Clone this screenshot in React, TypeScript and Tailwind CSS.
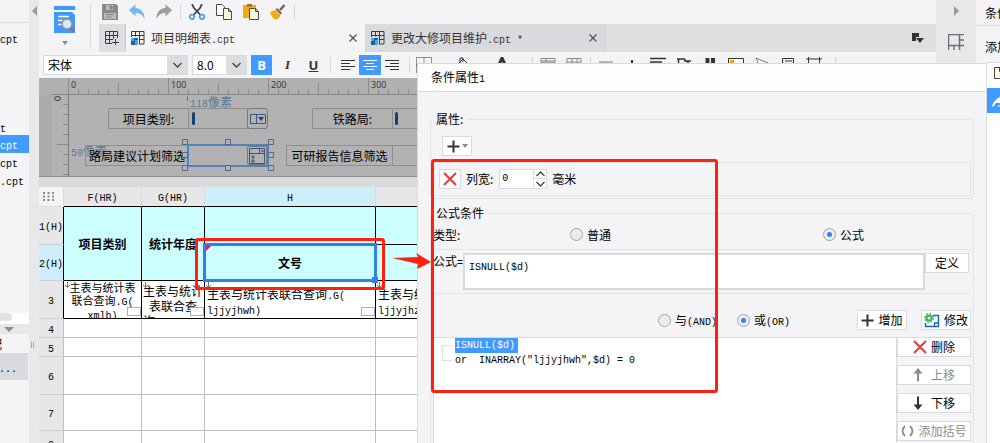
import React from "react";
import clsx from "clsx";

const ruler = Array.from({ length: 88 }, (_, i) => i * 10);
const vRuler = [9, 19, 29, 39, 49, 59, 69, 79];

// Latin characters are half as wide as the Chinese ones
const Mixed = ({ text }: { text: string }) => (
  <span>
    {text.split(/([\x20-\x7e]+)/).map((part, index) =>
      /^[\x20-\x7e]+$/.test(part) ? (
        <span
          key={index}
          className="font-['Liberation_Mono',monospace] text-[10px] leading-none whitespace-pre"
        >
          {part}
        </span>
      ) : (
        part
      )
    )}
  </span>
);

const Divider = () => <div className="h-4 w-px shrink-0 bg-[#d6d7da]" />;

const SaveIcon = () => (
  <svg viewBox="0 0 16 16" width={16} height={16}>
    <path d="M0 0h14l2 2v14H0z" fill="#8a8a8c" />
    <path d="M4 1h7v5H4zM2 9h12v6H2z" fill="#b9b9bb" />
    <path d="M8 2h2v3H8zM4 10.500h8M4 13h6" stroke="#8a8a8c" fill="#8a8a8c" />
  </svg>
);

const ArrowIcon = ({ flip }: { flip?: boolean }) => (
  <svg
    viewBox="0 0 16 16"
    width={16}
    height={16}
    className={clsx(flip && "-scale-x-100")}
  >
    <path
      d="M0 6L6.500 .5V4C12 4 15.500 8 15.500 15C13.500 11 11 9 6.500 9v3.500z"
      fill={flip ? "#9c9c9e" : "#7db4f2"}
    />
  </svg>
);

const ScissorsIcon = () => (
  <svg viewBox="0 0 16 16" width={16} height={16} fill="none">
    <path d="M3 0l2 4 6.500 7M13 0l-2 4-6.500 7" stroke="#3c3c3e" strokeWidth={1.700} />
    <circle cx={3} cy={12.800} r={2.300} stroke="#4096f7" strokeWidth={1.600} />
    <circle cx={13} cy={12.800} r={2.300} stroke="#4096f7" strokeWidth={1.600} />
  </svg>
);

const CopyIcon = () => (
  <svg viewBox="0 0 16 16" width={16} height={16} stroke="#4a4a4a">
    <path d="M.5 .5h5.500l2.500 2.500v8.500h-8z" fill="#fff" />
    <path d="M7.500 4.500h5l3 3v8h-8z" fill="#fff6e0" />
    <path d="M12.500 4.500v3h3" fill="none" />
  </svg>
);

const PasteIcon = () => (
  <svg viewBox="0 0 16 16" width={16} height={16}>
    <path d="M0 1h13v13H0z" fill="#f4ab13" />
    <path d="M4 0h5v2.500H4z" fill="#b06a16" />
    <path d="M6.500 4.500h6l3 3v8h-9z" fill="#fff6e0" stroke="#4a4a4a" />
    <path d="M12.500 4.500v3h3" fill="none" stroke="#4a4a4a" />
  </svg>
);

const BrushIcon = () => (
  <svg viewBox="0 0 16 16" width={16} height={16}>
    <path d="M14.500 1L10 6" stroke="#6b6461" strokeWidth={2.600} />
    <path d="M7 4l5 5-1.500 1.500-5-5z" fill="#6b6461" />
    <path d="M5 6l5.500 5c-1 3-3 4.500-5.500 4.500C2.500 14 1 11.500 0 8z" fill="#f4ab13" />
  </svg>
);

const TemplateIcon = () => (
  <svg viewBox="0 0 22 30" width={22} height={30}>
    <path d="M0 1h21v4H0zM0 7h18l3 3v18H0z" fill="#3f98fb" />
    <path d="M4 11.500h11M4 15.500h5M4 19.500h5" stroke="#fff" strokeWidth={1.400} />
    <circle cx={13} cy={19} r={5} fill="#dbe7f3" stroke="#8e9399" strokeWidth={1.400} />
    <path d="M17 23l3.500 3.500" stroke="#8a6f62" strokeWidth={2} />
  </svg>
);

const SheetIcon = () => (
  <svg viewBox="0 0 14 14" width={14} height={14} fill="none" className="shrink-0">
    <path d="M.5 6V.5h12.500v12.500H8M.5 4.500H13M8 8.500h5M4.500 .5v5M8.500 .5V13" stroke="#3c3c3e" />
    <path d="M0 7h7v3l-3 4H0z" fill="#1d5fa8" />
    <path d="M0 7h3v3H0zM4 9h3v5H4z" fill="#35b2ec" />
  </svg>
);

const AddSheetIcon = () => (
  <svg viewBox="0 0 14 14" width={14} height={14} fill="none" stroke="#3c3c3e">
    <path d="M7 12.500H.5V.5h12V7M.5 4.500h12M.5 8.500H8M4.500 .5v12M8.500 .5V8M10.500 8v6M7 11.500h7" />
  </svg>
);

const Chevron = ({ up }: { up?: boolean }) => (
  <svg viewBox="0 0 9 6" width={9} height={6} fill="none">
    <path d={up ? "M.5 5l4-4 4 4" : "M.5 1l4 4 4-4"} stroke="#444" strokeWidth={1.300} />
  </svg>
);

const Caret = () => (
  <svg viewBox="0 0 6 4" width={6} height={4}>
    <path d="M0 0h6L3 4z" fill="#8c8c8e" />
  </svg>
);

const CrossIcon = () => (
  <svg viewBox="0 0 14 14" width={14} height={14} className="shrink-0">
    <path d="M1 1l12 12M13 1L1 13" stroke="#e5413b" strokeWidth={2.200} />
  </svg>
);

const PlusIcon = () => (
  <svg viewBox="0 0 13 13" width={13} height={13} className="shrink-0">
    <path d="M6.500 .5v12M.5 6.500h12" stroke="#333" strokeWidth={2} />
  </svg>
);

const GearIcon = () => (
  <svg viewBox="0 0 16 15" width={16} height={15} className="shrink-0" fill="none">
    <path d="M9 2.500h5.500v11h-13V10M10.500 13.500v-3.500h4" stroke="#1565b0" strokeWidth={1.400} />
    <circle cx={5} cy={5} r={2.500} stroke="#35b558" strokeWidth={2} />
    <circle cx={5} cy={5} r={4.200} stroke="#35b558" strokeWidth={1.600} strokeDasharray="1.650" />
  </svg>
);

const MoveIcon = ({ down }: { down?: boolean }) => (
  <svg
    viewBox="0 0 10 14"
    width={10}
    height={14}
    className={clsx("shrink-0", down && "rotate-180")}
  >
    <path d="M5 0l4.500 5.500h-9z" fill={down ? "#333" : "#8a8a8a"} />
    <path d="M5 3v10.500" stroke={down ? "#333" : "#8a8a8a"} strokeWidth={2} />
  </svg>
);

const ParenIcon = () => (
  <svg viewBox="0 0 13 12" width={13} height={12} className="shrink-0" fill="none">
    <path d="M4 1Q-1 6 4 11M9 1Q14 6 9 11" stroke="#8a8a8a" strokeWidth={1.800} />
  </svg>
);

const AlignIcon = ({ d, light }: { d: string; light?: boolean }) => (
  <svg viewBox="0 0 14 12" width={14} height={12}>
    <path d={d} stroke={light ? "#fff" : "#333"} strokeWidth={1} />
  </svg>
);

const Field = ({ children, size, label }: any) => (
  <div className={clsx("flex h-5 border border-[#d9dadd] bg-white", size)}>
    <select
      aria-label={label}
      className="min-w-0 flex-1 appearance-none bg-white pl-1 text-[12px] leading-4 text-black"
    >
      {children}
    </select>
    <div className="flex w-5 shrink-0 items-center justify-center bg-[#dcdde0]">
      <Chevron />
    </div>
  </div>
);

const Tab = ({ name, active }: { name: string; active?: boolean }) => (
  <div
    className={clsx(
      "flex h-full w-60 items-center border-r border-[#d6d7da] pr-[6px] pl-[5px] text-[#333]",
      active ? "bg-[#f4f4f7]" : "bg-[#d9dadd]"
    )}
  >
    <SheetIcon />
    <span className="ml-[6px] flex-1">
      <Mixed text={name} />
    </span>
    <button aria-label="关闭" className="p-[2px]">
      <svg viewBox="0 0 8 8" width={8} height={8}>
        <path d="M.5 .5l7 7M7.500 .5l-7 7" stroke="#555" strokeWidth={1.300} />
      </svg>
    </button>
  </div>
);

const FormatIcon = ({ children, width }: any) => (
  <button className={clsx("flex h-5 shrink-0 items-center justify-center", width)}>
    <svg viewBox="0 0 16 16" width={16} height={16} fill="none" stroke="#333">
      {children}
    </svg>
  </button>
);

const Header = () => (
  <div className="shrink-0">
    <div className="flex">
      <div className="flex w-[60px] shrink-0 justify-between pr-2 pl-[15px]">
        <div className="flex flex-col items-center pt-[5px]">
          <TemplateIcon />
          <div className="mt-[6px]">
            <Caret />
          </div>
        </div>
        <div className="mt-[5px] h-[42px] w-px bg-[#d6d7da]" />
      </div>
      <div className="min-w-0 flex-1">
        <div className="flex h-6 items-center pl-[3px]">
          <div className="flex gap-[11px]">
            <SaveIcon />
            <ArrowIcon />
            <ArrowIcon flip />
          </div>
          <div className="mx-2">
            <Divider />
          </div>
          <div className="flex gap-[11px]">
            <ScissorsIcon />
            <CopyIcon />
            <PasteIcon />
            <BrushIcon />
          </div>
          <div className="mx-2">
            <Divider />
          </div>
        </div>
        <div className="flex h-7 items-center bg-[#dfdfe1]">
          <button
            aria-label="新建"
            className="flex h-full w-[27px] items-center justify-center border-r border-[#c8c9cc] bg-[#dcdde0]"
          >
            <AddSheetIcon />
          </button>
          <Tab name="项目明细表.cpt" active />
          <Tab name="更改大修项目维护.cpt *" />
          <svg viewBox="0 0 12 10" width={12} height={10} className="mr-3 ml-auto">
            <path d="M0 0h7v4H4v4H0zM4 5h8L8 10z" fill="#333" />
          </svg>
        </div>
      </div>
    </div>
    <div className="flex h-[26px] items-center overflow-hidden pl-1">
      <Field size="w-[145px]" label="字体">
        <option>宋体</option>
      </Field>
      <div className="w-1" />
      <Field size="w-[55px]" label="字号">
        <option>8.0</option>
      </Field>
      <div className="ml-1 flex gap-[5px] font-['Open_Sans',sans-serif] text-[13px] font-bold">
        <button className="h-5 w-[21px] bg-[#409aff] leading-5 text-white">B</button>
        <button className="h-5 w-[21px] font-['Liberation_Serif',serif] leading-5 text-[#333] italic">
          I
        </button>
        <button className="h-5 w-[21px] leading-5 text-[#333] underline">U</button>
      </div>
      <div className="mr-[6px] ml-[6px]">
        <Divider />
      </div>
      <div className="flex">
        <button className="flex h-5 w-[22px] items-center justify-center">
          <AlignIcon d="M0 1.500h14M0 4.500h9M0 7.500h14M0 10.500h9" />
        </button>
        <button className="flex h-5 w-[22px] items-center justify-center bg-[#409aff]">
          <AlignIcon d="M0 1.500h14M3 4.500h8M0 7.500h14M3 10.500h8" light />
        </button>
        <button className="flex h-5 w-[22px] items-center justify-center">
          <AlignIcon d="M0 1.500h14M5 4.500h9M0 7.500h14M5 10.500h9" />
        </button>
      </div>
      <div className="ml-[6px]">
        <Divider />
      </div>
      <div className="flex">
        <FormatIcon width="w-7">
          <path d="M.5 .5h15v15H.5zM8 .5v15M.5 8h15" strokeDasharray="1" />
        </FormatIcon>
        <FormatIcon width="w-[48px]">
          <path d="M3 8l6-6 6 6-6 6zM6 6V1h3v4" />
        </FormatIcon>
        <FormatIcon width="w-8">
          <path d="M3 12L8 1l5 11M5 8h6" strokeWidth={3} />
        </FormatIcon>
      </div>
      <div className="mr-[2px] ml-[14px]">
        <Divider />
      </div>
      <div className="flex">
        <FormatIcon width="w-[26px]">
          <path d="M1 1.500h14v12H1zM1 4h14M6 1v3" stroke="#888" />
          <path d="M1 4h14v4H1z" fill="#aaa" stroke="none" />
        </FormatIcon>
        <FormatIcon width="w-[26px]">
          <path d="M1 1.500h14v12H1zM1 5h14M6 1v12M11 1v12" stroke="#888" />
        </FormatIcon>
      </div>
      <div className="mr-[2px] ml-[3px]">
        <Divider />
      </div>
      <div className="flex">
        <FormatIcon width="w-[26px]">
          <path d="M1 5h14M1 10h14" stroke="#777" />
        </FormatIcon>
        <FormatIcon width="w-[26px]">
          <path d="M8 3v10" strokeWidth={2} />
        </FormatIcon>
        <FormatIcon width="w-[26px]">
          <path d="M0 1.500h16M0 5h12M0 9h16" strokeWidth={1.500} />
        </FormatIcon>
        <FormatIcon width="w-[26px]">
          <path d="M1 2h8M2.500 2v11M9 2v3M9 4h6M12 4v8" strokeWidth={1.500} />
        </FormatIcon>
        <FormatIcon width="w-[26px]">
          <path d="M5.500 1v12M11 1v12" strokeWidth={4} />
        </FormatIcon>
        <FormatIcon width="w-[26px]">
          <path d="M.5 1.500h15v12H.5z" fill="#fff" />
          <path d="M2 3h4v4H2z" fill="#f4ab13" stroke="none" />
        </FormatIcon>
        <FormatIcon width="w-[26px]">
          <path d="M2 1l12 5-5 2-2 5z" stroke="#777" />
        </FormatIcon>
        <FormatIcon width="w-[26px]">
          <path d="M2.500 1.500h11v12h-11zM5 4h7M5 6.500h7" />
        </FormatIcon>
        <FormatIcon width="w-[26px]">
          <path d="M0 2h16M2.500 0v14M13.500 0v14" />
        </FormatIcon>
      </div>
      <div className="ml-2">
        <Divider />
      </div>
    </div>
  </div>
);

const handles = [
  "left-[113px] top-[44px]",
  "left-[156px] top-[44px]",
  "left-[199px] top-[44px]",
  "left-[113px] top-[57px]",
  "left-[199px] top-[57px]",
  "left-[113px] top-[70px]",
  "left-[156px] top-[70px]",
  "left-[199px] top-[70px]",
];

const widget = "absolute h-[21px] border border-[#8f8f8f] text-center leading-[19px]";

// Parameter pane: rulers and the free canvas with the query widgets
const ParamPane = () => (
  <div className="shrink-0 overflow-hidden border-b border-[#929292] bg-[#b2b2b2] text-black">
    <svg width="100%" height={17} className="block bg-[#b0b0b0]">
      <g stroke="#8c8c8c">
        {ruler.map((x) => (
          <line
            key={x}
            x1={x + 29.500}
            x2={x + 29.500}
            y1={x % 100 === 0 ? 0 : x % 50 === 0 ? 5 : 11}
            y2={16}
          />
        ))}
        <line x1={13} x2="100%" y1={16.500} y2={16.500} stroke="#888" />
      </g>
      {ruler
        .filter((x) => x % 100 === 0)
        .map((x) => (
          <text
            key={x}
            x={x + 32}
            y={10}
            fill="#333"
            className="font-['Open_Sans',sans-serif] text-[9px]"
          >
            {x}
          </text>
        ))}
    </svg>
    <div className="flex h-[81px]">
      <div className="w-[13px] bg-[#ababab]" />
      <svg width={17} height={81} className="block shrink-0">
        <g stroke="#8c8c8c">
          {vRuler.map((y) => (
            <line key={y} x1={y === 49 ? 5 : 11} x2={16} y1={y + 0.5} y2={y + 0.5} />
          ))}
          <line x1={16.500} x2={16.500} y1={0} y2={81} stroke="#777" />
        </g>
        <ellipse cx={5.500} cy={3.500} rx={3} ry={2} fill="none" stroke="#333" />
      </svg>
      <div className="relative flex-1">
        <span className="absolute top-0 left-[121px] text-[#5c7a96]">
          <Mixed text="118像素" />
        </span>
        <div className="absolute top-[1px] left-[118px] h-[5px] w-px bg-[#5c7a96]" />
        <span className="absolute top-[49px] left-[2px] text-[#5c7a96]">
          <Mixed text="50像素" />
        </span>
        <div className={clsx(widget, "top-[13px] left-[39px] w-[81px]")}>项目类别:</div>
        <div className={clsx(widget, "top-[13px] left-[119px] w-[60px]")}>
          <div className="mt-[3px] ml-[3px] h-[13px] w-[3px] rounded-full bg-[#0d4478]" />
        </div>
        <div className="absolute top-[13px] left-[178px] flex h-[21px] w-[21px] items-center justify-center rounded-[3px] border border-[#777]">
          <svg viewBox="0 0 16 10" width={16} height={10}>
            <path d="M.5 .5h15v9H.5zM6.500 .5v9" fill="none" stroke="#3a5788" />
            <path d="M8 3h6l-3 4z" fill="#1d3f7c" />
          </svg>
        </div>
        <div className={clsx(widget, "top-[50px] left-[16px] w-[104px]")}>
          路局建议计划筛选
        </div>
        <div className="absolute top-[49px] left-[118px] flex h-[23px] w-[82px] justify-end border-2 border-[#4f83c1]">
          <div className="flex w-5 items-center justify-center rounded-[2px] border border-[#777]">
            <svg viewBox="0 0 16 16" width={16} height={16} fill="none" stroke="#3a5788">
              <path d="M.5 .5h15v15H.5zM.5 5.500h15M10.500 .5v5M3 8h2v2H3zM3 12h2v2H3z" />
              <path d="M12 2.500h3l-1.500 2z" fill="#1d3f7c" stroke="none" />
            </svg>
          </div>
        </div>
        {handles.map((pos) => (
          <div
            key={pos}
            className={clsx("absolute size-[6px] border border-[#4e6f92] bg-[#b2b2b2]", pos)}
          />
        ))}
        <div className={clsx(widget, "top-[13px] left-[243px] w-[81px]")}>铁路局:</div>
        <div className={clsx(widget, "top-[13px] left-[323px] w-[60px]")}>
          <div className="mt-[3px] ml-[2px] h-[13px] w-[3px] rounded-full bg-[#0d4478]" />
        </div>
        <div className={clsx(widget, "top-[50px] left-[217px] w-[107px]")}>
          可研报告信息筛选
        </div>
        <div className={clsx(widget, "top-[50px] left-[323px] w-[60px]")} />
      </div>
    </div>
  </div>
);

const head = "border-r border-b border-r-[#d9dadd] border-b-black font-normal";
const rowHead = "border-r border-b border-b-[#cfd0d4] font-normal";
const cyan = "border-r border-b border-black bg-[#ccffff] font-bold";
const bound = "relative border-r border-b border-black bg-white p-0 align-top";
const empty = "border-r border-b border-[#bdbdbf] bg-white";

const CellMarks = () => (
  <>
    <svg viewBox="0 0 5 6" width={5} height={6} className="absolute top-[1px] left-px">
      <path d="M2.500 0v5M0 3l2.500 2.500L5 3" fill="none" stroke="#777" />
    </svg>
    <div className="absolute right-0 bottom-[2px] h-[9px] w-[14px] border border-[#9bb0d3] bg-white" />
  </>
);

const rows = [
  { n: 4, height: "h-[19px]" },
  { n: 5, height: "h-[19px]" },
  { n: 6, height: "h-[38px]" },
  { n: 7, height: "h-9" },
  { n: 8, height: "h-[25px]" },
];

const Sheet = () => (
  <table className="w-full table-fixed border-separate border-spacing-0 bg-[#e7e7e9] text-center text-black">
    <colgroup>
      <col className="w-[25px]" />
      <col className="w-[78px]" />
      <col className="w-[63px]" />
      <col className="w-[171px]" />
      <col />
    </colgroup>
    <thead>
      <tr className="h-5">
        <th className="border-r border-b border-[#d9dadd] bg-[#f4f4f7] p-0">
          <svg viewBox="0 0 11 9" width={11} height={9} className="ml-1">
            <path
              d="M0 1h11M0 4.500h11M0 8h11"
              stroke="#8c8c8e"
              strokeWidth={2}
              strokeDasharray="2 2.500"
            />
          </svg>
        </th>
        <th className={head}><Mixed text="F(HR)" /></th>
        <th className={head}><Mixed text="G(HR)" /></th>
        <th className={clsx(head, "bg-[#cfeefb]")}><Mixed text="H" /></th>
        <th className={head} />
      </tr>
    </thead>
    <tbody>
      <tr className="h-[38px]">
        <th className={clsx(rowHead, "border-r-black p-0")}><Mixed text="1(H)" /></th>
        <td rowSpan={2} className={cyan}>项目类别</td>
        <td rowSpan={2} className={clsx(cyan, "p-0")}>统计年度</td>
        <td className={cyan} />
        <td className={cyan} />
      </tr>
      <tr className="h-9">
        <th className={clsx(rowHead, "border-r-black bg-[#cfeefb] p-0")}>
          <Mixed text="2(H)" />
        </th>
        <td className={clsx(cyan, "relative")}>
          文号
          <div className="absolute -inset-[2px] z-10 border-[3px] border-[#2f80ed]">
            <svg viewBox="0 0 5 5" width={5} height={5} className="absolute top-0 left-0">
              <path d="M0 0h5L0 5z" fill="#f0144a" />
            </svg>
            <div className="absolute -right-[4px] -bottom-[4px] size-[6px] bg-[#2f80ed]" />
          </div>
        </td>
        <td className={cyan} />
      </tr>
      <tr>
        <th className={clsx(rowHead, "border-r-black p-0")}><Mixed text="3" /></th>
        <td className={bound}>
          <div className="h-[37px] overflow-hidden text-[11px] leading-[13px]">
            主表与统计表
            <br />
            <Mixed text="联合查询.G(" />
            <br />
            <Mixed text="xmlb)" />
          </div>
          <CellMarks />
        </td>
        <td className={bound}>
          <div className="h-[37px] overflow-hidden pt-[2px] leading-[15px]">
            主表与统计
            <br />
            表联合查
            <br />
            <Mixed text="询.G(tjnd)" />
          </div>
          <CellMarks />
        </td>
        <td className={bound}>
          <div className="h-[37px] overflow-hidden pt-[6px] pl-[2px] text-left leading-[14px]">
            <Mixed text="主表与统计表联合查询.G(" />
            <br />
            <Mixed text="ljjyjhwh)" />
          </div>
          <CellMarks />
        </td>
        <td className={bound}>
          <div className="h-[37px] overflow-hidden pt-[6px] pl-[2px] text-left leading-[14px]">
            <Mixed text="主表与统计表联合查询.G(" />
            <br />
            <Mixed text="ljjyjhzt)" />
          </div>
          <CellMarks />
        </td>
      </tr>
      {rows.map((row) => (
        <tr key={row.n} className={row.height}>
          <th className={clsx(rowHead, "border-r-[#bdbdbf] p-0")}>
            <Mixed text={String(row.n)} />
          </th>
          <td className={empty} />
          <td className={empty} />
          <td className={empty} />
          <td className={empty} />
        </tr>
      ))}
    </tbody>
  </table>
);

const LeftPanel = () => (
  <div className="flex w-[29px] shrink-0 flex-col overflow-hidden bg-[#f4f4f7] text-right text-black">
    <div className="h-[23px] shrink-0 border-b border-[#d9dadd]" />
    <div className="h-[311px] shrink-0 leading-[18px]">
      <div className="mt-[6px] h-[90px] pr-[14px]"><Mixed text="cpt" /></div>
      <div className="h-4 pr-[26px] leading-4"><Mixed text="t" /></div>
      <div className="h-[18px] bg-[#409aff] pr-[14px] text-white">
        <Mixed text="cpt" />
      </div>
      <div className="h-[18px] pr-[14px]"><Mixed text="cpt" /></div>
      <div className="h-[18px] pr-[8px]"><Mixed text=".cpt" /></div>
      <div className="mt-[124px] h-[11px] bg-white">
        <div className="h-2 w-3 rounded-r bg-[#e2e2e4]" />
      </div>
      <div className="flex h-[10px] items-center bg-[#e7e7e9] pl-1">
        <svg viewBox="0 0 10 5" width={10} height={5}>
          <path d="M0 0h10L5 5z" fill="#8c8c8e" />
        </svg>
      </div>
    </div>
    <div className="flex h-5 shrink-0 items-center justify-end border-b border-[#d9dadd] pr-[27px]">
      <span>配</span>
    </div>
    <div className="mr-px flex h-[26px] shrink-0 items-center justify-end bg-[#d9dadf] pr-[11px]">
      <Mixed text="..." />
    </div>
  </div>
);

const button =
  "flex h-5 items-center justify-center border border-[#d9dadd] bg-white whitespace-nowrap text-black disabled:text-[#8a8a8a]";

const Radio = ({ name, text, checked }: { name: string; text: string; checked?: boolean }) => (
  <label className="flex items-center gap-1 text-black">
    <input
      type="radio"
      name={name}
      defaultChecked={checked}
      className="size-[13px] appearance-none rounded-full border border-[#a4a4a6] bg-[#ececee] checked:bg-[radial-gradient(circle,#2f86f6_0_2px,#ececee_3px)]"
    />
    <Mixed text={text} />
  </label>
);

const legend = "px-[3px] leading-[14px]";

const Dialog = () => (
  <div className="absolute top-[63px] right-[13px] bottom-0 left-[417px] z-20 flex flex-col overflow-hidden border border-b-0 border-[#d9dadd] bg-[#f4f4f7] text-black">
    <div className="flex h-7 shrink-0 items-center border-b border-[#d9dadd] bg-[#fdfdfd] pl-[13px]">
      <Mixed text="条件属性1" />
    </div>
    <div className="mt-5 mr-3 ml-3 flex flex-1 flex-col">
      <fieldset className="rounded border border-[#e3e4e7] px-[2px] pb-[2px]">
        <legend className={legend}>属性:</legend>
        <button aria-label="添加属性" className={clsx(button, "mt-[10px] ml-[9px] w-[30px] gap-[2px]")}>
          <PlusIcon />
          <Caret />
        </button>
        <div className="mt-[6px] flex h-[34px] items-center border border-[#e3e4e7] pl-[5px]">
          <button aria-label="移除" className={clsx(button, "w-[22px]")}>
            <CrossIcon />
          </button>
          <label htmlFor="width" className="ml-[5px]">
            列宽:
          </label>
          <div className="ml-[6px] flex h-5 w-12 border border-[#d9dadd] bg-white">
            <input
              id="width"
              defaultValue="0"
              className="w-8 min-w-0 flex-1 pl-[2px] font-['Liberation_Mono',monospace] text-[10px]"
            />
            <div className="flex w-[13px] flex-col items-center justify-around border-l border-[#d9dadd]">
              <Chevron up />
              <div className="h-px w-full bg-[#d9dadd]" />
              <Chevron />
            </div>
          </div>
          <span className="ml-[5px]">毫米</span>
        </div>
      </fieldset>
      <fieldset className="mt-[7px] flex min-h-0 flex-1 flex-col rounded-t border border-b-0 border-[#e3e4e7] px-[2px]">
        <legend className={legend}>公式条件</legend>
        <div className="flex h-[30px] items-center border-b border-[#e3e4e7]">
          <span className="w-[137px]">类型:</span>
          <div className="flex-1">
            <Radio name="type" text="普通" />
          </div>
          <div className="w-[148px]">
            <Radio name="type" text="公式" checked />
          </div>
        </div>
        <div className="flex h-11 items-start border-b border-[#e3e4e7] pt-[3px] pr-[2px]">
          <label htmlFor="formula" className="w-[30px] pt-[1px] whitespace-nowrap">
            <Mixed text="公式=" />
          </label>
          <textarea
            id="formula"
            defaultValue="ISNULL($d)"
            className="h-[37px] min-w-0 flex-1 resize-none border-2 border-[#d9dadd] bg-white px-1 py-[6px] font-['Liberation_Mono',monospace] text-[10px] leading-[14px]"
          />
          <button className={clsx(button, "w-11")}>定义</button>
        </div>
        <div className="mt-4 mb-[7px] flex h-5 items-center justify-end">
          <Radio name="join" text="与(AND)" />
          <div className="w-5" />
          <Radio name="join" text="或(OR)" checked />
          <button className={clsx(button, "ml-[67px] w-[50px] gap-1")}>
            <PlusIcon />
            增加
          </button>
          <button className={clsx(button, "ml-[14px] w-[50px] gap-1")}>
            <GearIcon />
            修改
          </button>
        </div>
        <div className="flex min-h-0 flex-1">
          <div className="flex flex-1 border border-b-0 border-[#d9dadd] bg-white pl-2">
            <div className="mt-[7px] mr-[3px] h-4 w-[10px] border border-r-0 border-[#e0e0e3]" />
            <div className="font-['Liberation_Mono',monospace] text-[10px] leading-[15px] whitespace-pre">
              <div className="w-[63px] bg-[#409aff] text-white">ISNULL($d)</div>
              <div>or  INARRAY("ljjyjhwh",$d) = 0</div>
            </div>
          </div>
          <div className="flex w-[74px] flex-col gap-2">
            <button className={clsx(button, "gap-1")}>
              <CrossIcon />
              删除
            </button>
            <button disabled className={clsx(button, "gap-2")}>
              <MoveIcon />
              上移
            </button>
            <button className={clsx(button, "gap-2")}>
              <MoveIcon down />
              下移
            </button>
            <button disabled className={clsx(button, "gap-1")}>
              <ParenIcon />
              添加括号
            </button>
          </div>
        </div>
      </fieldset>
    </div>
  </div>
);

const RightPanel = () => (
  <div className="flex w-6 shrink-0 flex-col overflow-hidden bg-[#f4f4f7] whitespace-nowrap text-black">
    <div className="h-[26px] shrink-0 border-b border-[#d9dadd] pt-[6px] pl-[9px]">条件</div>
    <div className="h-9 shrink-0 pt-[14px] pl-[9px]">添加</div>
    <div className="ml-[10px] flex-1 border-t border-l border-[#d9dadd] bg-white">
      <svg viewBox="0 0 12 12" width={12} height={12} className="mt-1 mb-[9px] ml-[7px]">
        <path d="M.5 .5h6l5 5v6H.5z" fill="#fff6e0" stroke="#444" />
        <path d="M5.500 .5v4h4" fill="none" stroke="#444" />
      </svg>
      <div className="h-[25px] bg-[#409aff] pt-[7px] pl-[5px]">
        <svg viewBox="0 0 14 12" width={14} height={12}>
          <path d="M0 11C2 5 6 2 12 0l-3 8H4l-3 4zM6 10.500h7v1H6z" fill="#fff" />
        </svg>
      </div>
    </div>
  </div>
);

const App = () => {
  return (
    <div className="relative flex h-screen w-full overflow-hidden bg-[#f4f4f7] font-['Noto_Sans_CJK_SC',sans-serif] text-[12px] leading-[14px]">
      <LeftPanel />
      <div className="flex w-[10px] shrink-0 flex-col items-center bg-[#e8e8ea]">
        <svg viewBox="0 0 5 10" width={5} height={10} className="mt-[6px]">
          <path d="M5 0v10L0 5z" fill="#9a9a9c" />
        </svg>
        <div className="mt-[326px] mr-[3px] h-[6px] w-[3px] border-x border-[#a8a8aa]" />
      </div>
      <div className="flex min-w-0 flex-1 flex-col">
        <Header />
        <ParamPane />
        <div className="h-[10px] shrink-0 bg-[#dadadd]" />
        <Sheet />
      </div>
      <div className="flex w-10 shrink-0 flex-col items-center bg-[#e8e8e8]">
        <svg viewBox="0 0 5 10" width={5} height={10} className="mt-[6px]">
          <path d="M0 0v10l5-5z" fill="#9a9a9c" />
        </svg>
        <svg viewBox="0 0 16 16" width={16} height={16} className="mt-[18px]" fill="none">
          <path d="M.5 16V.5H16M.5 11.500H16M11.500 .5V16M11.500 6H16M6 11.500V16" stroke="#6b6e78" strokeWidth={1.500} />
        </svg>
      </div>
      <RightPanel />
      <Dialog />
      <div className="pointer-events-none absolute top-[238px] left-[195px] z-30 h-[52px] w-[190px] rounded-[3px] border-[3px] border-[#ff2012]" />
      <div className="pointer-events-none absolute top-[159px] left-[431px] z-30 h-[234px] w-[287px] rounded-[3px] border-[3px] border-[#ff2012]" />
      <svg
        viewBox="0 0 40 18"
        width={40}
        height={18}
        className="pointer-events-none absolute top-[252px] left-[392px] z-30"
      >
        <path d="M0 6l26-1-2-4 15 9-14 7 1-5z" fill="#ff2012" />
      </svg>
    </div>
  );
};

export default App;
